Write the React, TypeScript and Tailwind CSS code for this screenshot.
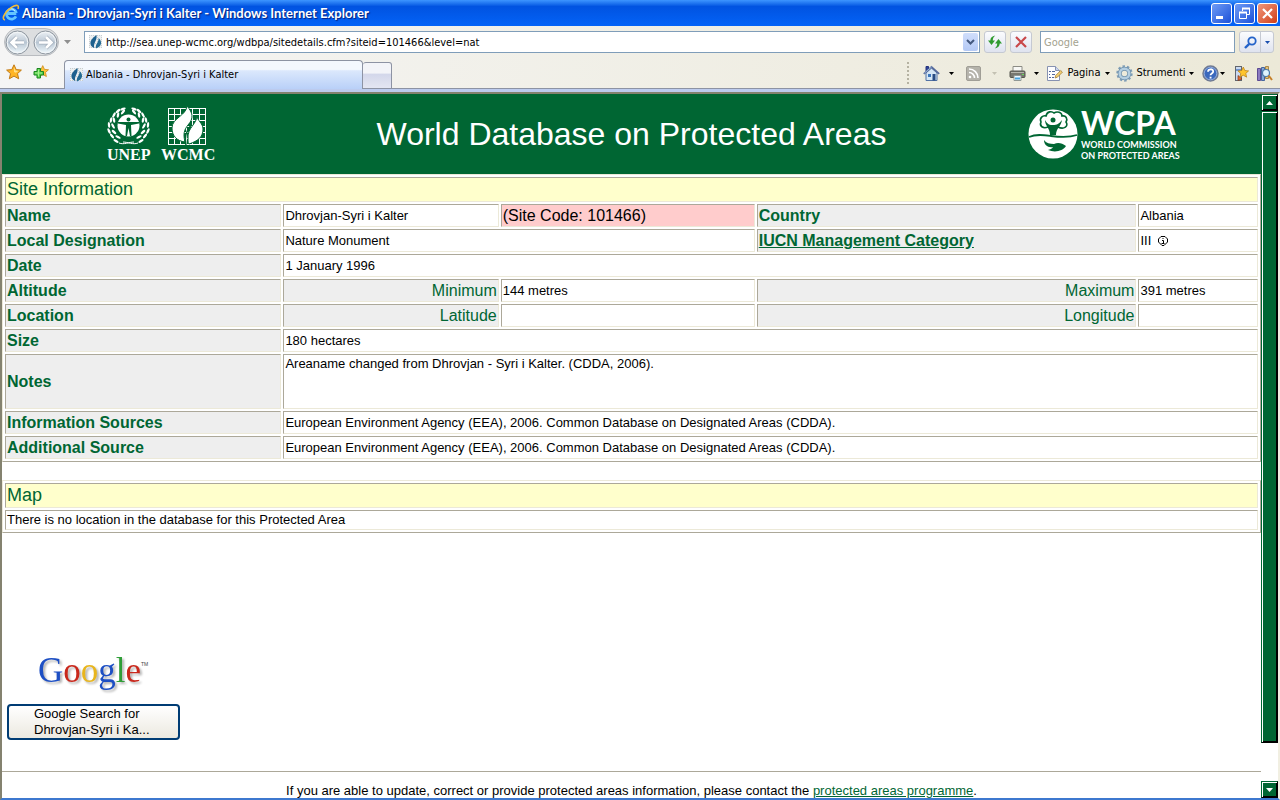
import type { ReactNode } from 'react';

const UI_FONT = "font-['DejaVu_Sans_Condensed','DejaVu_Sans',sans-serif]";

function IeIcon() {
  return (
    <svg width="18" height="18" viewBox="0 0 18 18" className="shrink-0">
      <path d="M4.5 9.5h9.8M14 12.4A5 5 0 1 1 14.4 9" fill="none" stroke="#64c5ff" strokeWidth="2.8" />
      <path d="M5 7.2a4.5 4.5 0 0 1 8 0" fill="none" stroke="#c9efff" strokeWidth="1" />
      <path d="M3 16C-2 15 5 5 12 2c4-1.600 5 0 4 3" fill="none" stroke="#f0bd39" strokeWidth="1.6" />
    </svg>
  );
}

function PageIcon() {
  return (
    <svg width="16" height="16" viewBox="0 0 16 16" className="shrink-0">
      <rect x="1" y="1" width="13" height="13" fill="#edf0f1" />
      <path d="M1.500 1v14M5.500 1v14M9.500 1v14M13.500 1v14M1 1.500h14M1 5.500h14M1 9.500h14M1 13.500h14" stroke="#c7cdd0" strokeWidth="1" strokeDasharray="1 1" />
      <path d="M8.500 1C5 4 2 6 2.500 10c.3 2 2 3.500 4 4C4.500 9.500 9.500 7 8.500 1Z" fill="#1d608e" />
      <path d="M10.500 4c4 3.500 3.500 8.500-2.500 10.500C7 9.500 11 9 10.500 4Z" fill="#246b94" />
    </svg>
  );
}

function NavButtons() {
  return (
    <div className="flex h-[28px] w-[55px] items-center justify-between rounded-full border border-[#b9bcc0] bg-[#dcdee0]">
      {[0, 1].map((n) => (
        <button key={n} type="button" aria-label={n === 0 ? 'Indietro' : 'Avanti'}>
          <svg width="25" height="25" viewBox="0 0 25 25">
            <defs>
              <linearGradient id={`nav${n}`} x1="0" y1="0" x2="0" y2="1">
                <stop offset="0" stopColor="#eef2f6" />
                <stop offset=".5" stopColor="#b9c6d3" />
                <stop offset="1" stopColor="#f2fbff" />
              </linearGradient>
            </defs>
            <circle cx="12.500" cy="12.500" r="11.500" fill={`url(#nav${n})`} stroke="#8d959e" />
            <circle cx="12.500" cy="12.500" r="10.200" fill="none" stroke="#f3f6f8" />
            <path
              d={n === 0 ? 'M19 12.500H7M12 7l-5.500 5.500L12 18' : 'M6 12.500h12M13 7l5.500 5.500L13 18'}
              fill="none"
              stroke="#a4afbc"
              strokeWidth="4"
            />
            <path
              d={n === 0 ? 'M19 12.500H7M12 7l-5.500 5.500L12 18' : 'M6 12.500h12M13 7l5.500 5.500L13 18'}
              fill="none"
              stroke="#fff"
              strokeWidth="2.600"
            />
          </svg>
        </button>
      ))}
    </div>
  );
}

function Caret({ color = '#000' }: { color?: string }) {
  return (
    <svg width="5" height="3" viewBox="0 0 5 3" className="shrink-0">
      <path d="M0 0h5L2.500 3Z" fill={color} />
    </svg>
  );
}

const STAR = 'M8 .8l2.200 4.800 5.200.5-3.900 3.500 1.200 5.200L8 12.100l-4.700 2.700 1.200-5.200L.6 6.100l5.200-.5Z';

function StarIcon() {
  return (
    <svg width="16" height="16" viewBox="0 0 16 16">
      <path d={STAR} fill="#ffb526" stroke="#c17a16" />
      <path d="M8 3l1.400 3.600 3 .4-2.600 1.800L8 8Z" fill="#ffe08a" />
    </svg>
  );
}

function AddStarIcon() {
  return (
    <svg width="16" height="16" viewBox="0 0 16 16">
      <path d={STAR} fill="#ffc43a" stroke="#c98a1d" transform="translate(3.500 1) scale(.78)" />
      <path d="M4 4.500h3.500v3h3V11h-3v3H4v-3H1V7.500h3Z" fill="#52cf48" stroke="#1c8522" />
      <path d="M5.500 5.500v7M2 9h7" stroke="#a8f08f" />
    </svg>
  );
}

function HomeIcon() {
  return (
    <svg width="17" height="17" viewBox="0 0 17 17">
      <path d="M3 1.500h2.500V5L3 7Z" fill="#31439b" stroke="#24347d" />
      <path d="M3 8v7.500h11V8L8.500 3Z" fill="#d5e6f5" stroke="#5272a4" />
      <path d="M.8 8.800 8.500 2l7.700 6.800" fill="none" stroke="#566a9b" strokeWidth="1.800" />
      <path d="M1.500 8 8.500 2" stroke="#9bb6db" />
      <rect x="5" y="9" width="3" height="3" fill="#3c76bc" />
      <rect x="9.500" y="9" width="3" height="6.500" fill="#284b83" />
    </svg>
  );
}

function FeedIcon() {
  return (
    <svg width="15" height="15" viewBox="0 0 15 15">
      <rect x=".5" y=".5" width="14" height="14" rx="1.500" fill="#b5b3ab" stroke="#a09e96" />
      <circle cx="4" cy="11" r="1.300" fill="#fff" />
      <path d="M3 6.500A5.500 5.500 0 0 1 8.500 12M3 3a9 9 0 0 1 9 9" fill="none" stroke="#fff" strokeWidth="1.600" />
    </svg>
  );
}

function PrinterIcon() {
  return (
    <svg width="17" height="17" viewBox="0 0 17 17">
      <path d="M4 1.500h9v5H4Z" fill="#f8f8f5" stroke="#8c8c85" />
      <rect x="1" y="6" width="15" height="6.500" rx="1" fill="#77776f" stroke="#55554e" />
      <path d="M2 7.500h13" stroke="#b6b6ad" />
      <path d="M5 10.500h7v5H5Z" fill="#eef8ff" stroke="#909895" />
      <path d="M6 13.500h5" stroke="#4aa4dd" strokeWidth="2" />
      <path d="M13 9.500h2" stroke="#68d85a" />
    </svg>
  );
}

function DocIcon() {
  return (
    <svg width="17" height="17" viewBox="0 0 17 17">
      <path d="M1.500 1.500h8l4 4v10h-12Z" fill="#fdfdff" stroke="#8792b1" />
      <path d="M9.500 1.500v4h4" fill="#cbd5ef" stroke="#8792b1" />
      <path d="M3 6.500h2m1 0h3M3 9.500h1m2 0h3M3 12.500h2m1 0h2" stroke="#52679d" />
      <path d="m9 13 .7-2.500 5-5 1.700 1.700-5 5Z" fill="#f2cf70" stroke="#a27b3a" strokeWidth=".8" />
    </svg>
  );
}

function GearIcon() {
  return (
    <svg width="17" height="17" viewBox="0 0 17 17">
      <circle cx="8.500" cy="8.500" r="7" fill="none" stroke="#7f9db6" strokeWidth="2.400" strokeDasharray="2.400 2" />
      <circle cx="8.500" cy="8.500" r="4.800" fill="none" stroke="#6e91ad" strokeWidth="4" />
      <circle cx="8.500" cy="8.500" r="4.800" fill="none" stroke="#b4cee1" strokeWidth="2.500" />
    </svg>
  );
}

function HelpIcon() {
  return (
    <svg width="17" height="17" viewBox="0 0 17 17">
      <circle cx="8.500" cy="8.500" r="7.500" fill="#3a68bd" stroke="#707a91" strokeWidth="1.500" />
      <circle cx="8.500" cy="8.500" r="6.300" fill="none" stroke="#b6c7e6" strokeWidth=".7" />
      <path d="M6 6.700C6 3.500 11.200 3.500 11.200 6.500c0 2-2.700 2-2.700 3.700" fill="none" stroke="#fff" strokeWidth="1.800" />
      <path d="M7.600 11.700h1.900v1.800H7.600Z" fill="#fff" />
    </svg>
  );
}

function SendStarIcon() {
  return (
    <svg width="15" height="17" viewBox="0 0 15 17">
      <rect x="1.500" y="1.500" width="6" height="14" fill="#cbd9ef" stroke="#61666e" />
      <path d="M2 5h5" stroke="#6f94cf" strokeWidth="2" />
      <path d="M4 15.500v-5l4 3.500Z" fill="#e66b33" stroke="#7e3519" strokeWidth=".7" />
      <path d={STAR} fill="#ffc52b" stroke="#b87c12" transform="translate(3.500 1.500) scale(.72)" />
    </svg>
  );
}

function ResearchIcon() {
  return (
    <svg width="17" height="17" viewBox="0 0 17 17">
      <path d="M1.500 3.500h3v12h-3Z" fill="#8b7bc0" stroke="#5c4b93" />
      <path d="M5.500 2.500h3v13h-3Z" fill="#83a7d9" stroke="#45659d" />
      <path d="M9.500 1.500h3v12h-3Z" fill="#e3c077" stroke="#a9884a" />
      <circle cx="10" cy="8" r="3.500" fill="#dff4ff" stroke="#4b7bab" strokeWidth="1.200" />
      <path d="m12.500 10.500 3.500 4.500" stroke="#c6802a" strokeWidth="2" />
    </svg>
  );
}

function TitleBar() {
  return (
    <header className="flex h-[26px] shrink-0 items-center bg-linear-to-b from-[#3d95ff] via-[#0153e1] via-25% to-[#0463f7] px-[2px]">
      <IeIcon />
      <h1 className="ml-[2px] flex-1 truncate font-['Lato',sans-serif] text-[13px] leading-[26px] font-bold text-white [text-shadow:1px_1px_1px_#0a1f7a]">
        Albania - Dhrovjan-Syri i Kalter - Windows Internet Explorer
      </h1>
      <div className="flex gap-[2px]">
        <button type="button" aria-label="Riduci a icona" className="size-[21px] rounded-[3px] border border-white bg-linear-to-br from-[#6f9bf5] to-[#1c4fd8]">
          <svg width="19" height="19" viewBox="0 0 19 19">
            <rect x="4" y="12" width="7" height="3" fill="#fff" />
          </svg>
        </button>
        <button type="button" aria-label="Ripristina" className="size-[21px] rounded-[3px] border border-white bg-linear-to-br from-[#6f9bf5] to-[#1c4fd8]">
          <svg width="19" height="19" viewBox="0 0 19 19" fill="none" stroke="#fff">
            <path d="M7.500 7V4.500h7v6H12" />
            <path d="M7 4.500h8" strokeWidth="2" />
            <path d="M4.500 8.500h7v6h-7Z" />
            <path d="M4 8.500h8" strokeWidth="2" />
          </svg>
        </button>
        <button type="button" aria-label="Chiudi" className="size-[21px] rounded-[3px] border border-white bg-linear-to-br from-[#f0967a] to-[#cf3a0c]">
          <svg width="19" height="19" viewBox="0 0 19 19">
            <path d="m5 5 9 9M14 5l-9 9" stroke="#fff" strokeWidth="2.200" />
          </svg>
        </button>
      </div>
    </header>
  );
}

function AddressBar() {
  return (
    <div className="flex h-[32px] items-center pl-[4px] pr-[6px]">
      <NavButtons />
      <button type="button" aria-label="Pagine recenti" className="mr-[13px] ml-[5px] flex w-[7px] justify-center">
        <svg width="7" height="4" viewBox="0 0 7 4">
          <path d="M0 0h7L3.500 4Z" fill="#8f8f8f" />
        </svg>
      </button>
      <div className="flex h-[22px] flex-1 items-center border border-[#7f9db9] bg-white pl-[3px] pr-px">
        <PageIcon />
        <input
          aria-label="Indirizzo"
          defaultValue="http://sea.unep-wcmc.org/wdbpa/sitedetails.cfm?siteid=101466&level=nat"
          className="ml-[2px] h-[18px] min-w-0 flex-1 bg-transparent text-[11px] text-black outline-none"
        />
        <button type="button" aria-label="Mostra indirizzi" className="flex h-[18px] w-[15px] items-center justify-center rounded-[2px] bg-linear-to-b from-[#d0defb] to-[#b4c9f5]">
          <svg width="9" height="6" viewBox="0 0 9 6">
            <path d="m1 1 3.500 3.500L8 1" fill="none" stroke="#44597f" strokeWidth="2" />
          </svg>
        </button>
      </div>
      <button type="button" aria-label="Aggiorna" className="ml-[4px] flex h-[22px] w-[22px] items-center justify-center rounded-[3px] border border-[#c5c9d2] bg-linear-to-b from-[#fbfcfe] to-[#dfe3ef]">
        <svg width="16" height="16" viewBox="0 0 16 16" fill="#2f9b2f">
          <path d="M1 6.500 4.500 11 8 6.500H5.800c0-2 .7-3.500 2.400-5C5 2 3.300 4 3.300 6.500Z" />
          <path d="M15 9.500 11.500 5 8 9.500h2.200c0 2-.7 3.500-2.400 5 3.200-.5 4.900-2.500 4.900-5Z" />
        </svg>
      </button>
      <button type="button" aria-label="Interrompi" className="ml-[4px] flex h-[22px] w-[22px] items-center justify-center rounded-[3px] border border-[#c5c9d2] bg-linear-to-b from-[#fbfcfe] to-[#dfe3ef]">
        <svg width="12" height="12" viewBox="0 0 12 12">
          <path d="M1 1l10 10M11 1 1 11" stroke="#c9484a" strokeWidth="2.200" />
        </svg>
      </button>
      <input
        aria-label="Cerca"
        placeholder="Google"
        className="ml-[8px] h-[22px] w-[195px] border border-[#7f9db9] bg-white px-[3px] text-[11px] outline-none placeholder:text-[#a3a28f]"
      />
      <div className="ml-[4px] flex h-[22px] rounded-[3px] border border-[#c5c9d2] bg-linear-to-b from-[#fbfcfe] to-[#dfe3ef]">
        <button type="button" aria-label="Avvia ricerca" className="flex w-[21px] items-center justify-center border-r border-[#c5c9d2]">
          <svg width="13" height="13" viewBox="0 0 13 13" fill="none" stroke="#2463c9">
            <circle cx="8" cy="5" r="3.700" strokeWidth="1.800" />
            <path d="M5.200 7.800 1 12" strokeWidth="2.400" />
          </svg>
        </button>
        <button type="button" aria-label="Opzioni di ricerca" className="flex w-[12px] items-center justify-center">
          <Caret color="#1a4fae" />
        </button>
      </div>
    </div>
  );
}

function Tool({ label, width, children }: { label: string; width: string; children: ReactNode }) {
  return (
    <button type="button" aria-label={label} className={`flex items-center justify-between ${width}`}>
      {children}
    </button>
  );
}

function TabRow() {
  return (
    <div className="flex h-[31px] items-end border-b border-[#8d93a3] pl-[6px] pr-[7px]">
      <div className="flex h-full items-center gap-[11px] pb-[2px]">
        <button type="button" aria-label="Preferiti">
          <StarIcon />
        </button>
        <button type="button" aria-label="Aggiungi a Preferiti">
          <AddStarIcon />
        </button>
      </div>
      <div className="-mb-px ml-[15px] flex h-[29px] w-[299px] items-center rounded-t-[4px] border border-b-0 border-[#8d93a3] bg-linear-to-b from-[#f4f8fe] from-30% via-[#dbe8fc] via-35% to-[#b9d0f8] pl-[4px]">
        <PageIcon />
        <span className="ml-px text-[11px] text-black">Albania - Dhrovjan-Syri i Kalter</span>
      </div>
      <button
        type="button"
        aria-label="Nuova scheda"
        className="-mb-px h-[27px] w-[29px] rounded-t-[3px] border border-l-0 border-[#8d93a3] bg-linear-to-b from-[#f3f4f8] from-40% via-[#d3d7ea] via-45% to-[#e4e6f2]"
      />
      <div className="ml-auto flex h-full items-center text-[11px] text-black">
        <span className="mr-[14px] h-[22px] border-l-2 border-dotted border-[#b5b2a2]" />
        <Tool label="Pagina iniziale" width="w-[31px]">
          <HomeIcon />
          <Caret />
        </Tool>
        <span className="w-[12px]" />
        <Tool label="Feed" width="w-[31px]">
          <FeedIcon />
          <Caret color="#c4c1b3" />
        </Tool>
        <span className="w-[12px]" />
        <Tool label="Stampa" width="w-[30px]">
          <PrinterIcon />
          <Caret />
        </Tool>
        <span className="w-[7px]" />
        <Tool label="Pagina" width="w-[64px]">
          <DocIcon />
          <span>Pagina</span>
          <Caret />
        </Tool>
        <span className="w-[6px]" />
        <Tool label="Strumenti" width="w-[78px]">
          <GearIcon />
          <span>Strumenti</span>
          <Caret />
        </Tool>
        <span className="w-[8px]" />
        <Tool label="Guida" width="w-[23px]">
          <HelpIcon />
          <Caret />
        </Tool>
        <span className="w-[9px]" />
        <Tool label="Invia a preferiti" width="w-[15px]">
          <SendStarIcon />
        </Tool>
        <span className="w-[7px]" />
        <Tool label="Ricerche" width="w-[17px]">
          <ResearchIcon />
        </Tool>
      </div>
    </div>
  );
}

// laurel leaves, drawn once and mirrored for the right-hand branch
const LEAVES = [
  [17, 3, 70], [12, 5, 50], [8, 9, 30], [5, 14, 10], [3, 19, -5], [3, 25, -25], [6, 30, -40], [10, 35, -60],
  [17, 6, 40], [12, 9, 10], [8, 14, -10], [7, 20, -30], [8, 26, -50], [12, 31, -65],
];

function UnepLogo() {
  return (
    <svg width="110" height="56" viewBox="0 0 110 56" aria-label="UNEP WCMC">
      <g fill="#fff">
        {LEAVES.map(([x, y, r]) => (
          <ellipse key={`${x}-${y}`} cx={x} cy={y} rx="1.200" ry="2.900" transform={`rotate(${r} ${x} ${y})`} />
        ))}
        <g transform="translate(45 0) scale(-1 1)">
          {LEAVES.map(([x, y, r]) => (
            <ellipse key={`${x}-${y}`} cx={x} cy={y} rx="1.200" ry="2.900" transform={`rotate(${r} ${x} ${y})`} />
          ))}
        </g>
        <circle cx="22.500" cy="19.500" r="11" />
      </g>
      <path d="M13 37c5 2 10-1 15-1M32 37c-5 2-10-1-15-1" fill="none" stroke="#fff" />
      <g fill="#063">
        <circle cx="22.500" cy="13.500" r="2" />
        <path d="M12 16h21v1.500l-8 1.500L25.500 30h-1.500l-1.500-8L21 30h-1.500L20 19l-8-1.500Z" />
      </g>
      <path
        d="M62.500 2v37M68.500 2v37M74.500 2v37M80.500 2v37M86.500 2v37M93.500 2v37M99.500 2v37M62 2.500h38M62 8.500h38M62 14.500h38M62 20.500h38M62 26.500h38M62 32.500h38M62 38.500h38"
        stroke="#fff"
        strokeWidth="1"
      />
      <path d="M81 0c6 7 7 12 1 19-4 5-5 9-3 17-8-1-13-6-13-14C66 12 80 10 81 0Z" fill="#fff" stroke="#063" />
      <path d="M91 9c0 10-10 12-9 24 0 3 0 4 1 5 9-3 14-7 14-15 0-6-6-8-6-14Z" fill="#fff" stroke="#063" />
      <path d="M80 39c-2-8 0-13 5-20" fill="none" stroke="#063" strokeWidth="1.500" />
      <g fill="#fff" fontFamily="Liberation Serif, serif" fontWeight="bold" fontSize="16">
        <text x="1" y="54">UNEP</text>
        <text x="55" y="54">WCMC</text>
      </g>
    </svg>
  );
}

function WcpaLogo() {
  return (
    <svg width="156" height="64" viewBox="0 -5 156 64" aria-label="WCPA">
      <circle cx="25" cy="27" r="24.500" fill="#fff" />
      <g fill="none" stroke="#063">
        <path
          d="M20 20c-5 2-9-1-7-5-2-4 2-7 5-6 1-5 6-5 8-3 3-2 8-1 8 3 4-1 6 3 4 6 3 4-2 8-8 5"
          strokeWidth="1.600"
        />
        <path d="M1 30c7-3 14-2 22-1s17 2 26-1" strokeWidth="1.800" />
      </g>
      <g fill="#063">
        <circle cx="25" cy="13" r="2.500" />
        <path d="M17 13c3 5 5 5 8 5 4 0 6-1 9-5-1 7-6 8-6 15h-6c0-7-5-9-5-15Z" />
        <path d="M16 33c2 3 6 4 10 4 4-2 8-1 12 2-3 5-11 7-18 4 2-1 4-1 5-3-5 1-9-2-9-7Z" />
      </g>
      <g fill="#fff" fontFamily="Lato, sans-serif" fontWeight="bold">
        <text x="53" y="28" fontSize="32">WCPA</text>
        <text x="53" y="41" fontSize="9">WORLD COMMISSION</text>
        <text x="53" y="52" fontSize="9">ON PROTECTED AREAS</text>
      </g>
    </svg>
  );
}

const CELL = 'border border-t-[#aca899] border-l-[#aca899] border-r-[#ece9d8] border-b-[#ece9d8] px-px py-0';
const LABEL = `${CELL} bg-[#eee] text-left text-[16px] leading-[21px] font-bold text-[#063]`;
const SUB = `${CELL} bg-[#eee] text-right text-[16px] leading-[21px] font-normal text-[#063]`;
const VALUE = `${CELL} h-[23px] bg-white text-[13px] leading-[18px] text-black`;
const BAND = `${CELL} h-[25px] bg-[#ffc] text-left text-[18px] leading-[23px] font-normal text-[#063]`;
const TABLE =
  'w-full table-fixed border-separate border-spacing-[2px] border border-t-[#ece9d8] border-l-[#ece9d8] border-r-[#aca899] border-b-[#aca899]';

function SiteTable() {
  return (
    <table className={TABLE}>
      <colgroup>
        <col className="w-[22.200%]" />
        <col className="w-[17.300%]" />
        <col className="w-[20.400%]" />
        <col className="w-[30.500%]" />
        <col />
      </colgroup>
      <tbody>
        <tr>
          <th colSpan={5} className={BAND}>Site Information</th>
        </tr>
        <tr>
          <th className={LABEL}>Name</th>
          <td className={VALUE}>Dhrovjan-Syri i Kalter</td>
          <td className={`${CELL} bg-[#fcc] text-[16px] leading-[21px] text-black`}>(Site Code: 101466)</td>
          <th className={LABEL}>Country</th>
          <td className={VALUE}>Albania</td>
        </tr>
        <tr>
          <th className={LABEL}>Local Designation</th>
          <td colSpan={2} className={VALUE}>Nature Monument</td>
          <th className={LABEL}>
            <a href="#iucn" className="underline">IUCN Management Category</a>
          </th>
          <td className={VALUE}>
            <div className="flex items-center gap-[6px]">
              III
              <svg width="12" height="12" viewBox="0 0 12 12" fill="none" stroke="#000">
                <path d="M4 1.500h4L10.500 4v3L7 10.500H5L1.500 7V4Z" />
                <path d="M5 5.500h1.500v3M4.500 8.500h3M5.500 3.500h1" />
              </svg>
            </div>
          </td>
        </tr>
        <tr>
          <th className={LABEL}>Date</th>
          <td colSpan={4} className={VALUE}>1 January 1996</td>
        </tr>
        <tr>
          <th className={LABEL}>Altitude</th>
          <th className={SUB}>Minimum</th>
          <td className={VALUE}>144 metres</td>
          <th className={SUB}>Maximum</th>
          <td className={VALUE}>391 metres</td>
        </tr>
        <tr>
          <th className={LABEL}>Location</th>
          <th className={SUB}>Latitude</th>
          <td className={VALUE} />
          <th className={SUB}>Longitude</th>
          <td className={VALUE} />
        </tr>
        <tr>
          <th className={LABEL}>Size</th>
          <td colSpan={4} className={VALUE}>180 hectares</td>
        </tr>
        <tr>
          <th className={LABEL}>Notes</th>
          <td colSpan={4} className={`${CELL} h-[55px] bg-white align-top text-[13px] leading-[18px] text-black`}>
            Areaname changed from Dhrovjan - Syri i Kalter. (CDDA, 2006).
          </td>
        </tr>
        {['Information Sources', 'Additional Source'].map((name) => (
          <tr key={name}>
            <th className={LABEL}>{name}</th>
            <td colSpan={4} className={VALUE}>
              European Environment Agency (EEA), 2006. Common Database on Designated Areas (CDDA).
            </td>
          </tr>
        ))}
      </tbody>
    </table>
  );
}

function GoogleLogo() {
  return (
    <svg width="116" height="46" viewBox="0 0 116 46" aria-label="Google">
      <text
        x="3"
        y="32"
        fontFamily="Liberation Serif, serif"
        fontSize="35"
        className="drop-shadow-[2px_2px_1px_rgba(0,0,0,0.3)]"
      >
        <tspan fill="#1d4fc4">G</tspan>
        <tspan fill="#c9281c">o</tspan>
        <tspan fill="#e8b51d">o</tspan>
        <tspan fill="#1d4fc4">g</tspan>
        <tspan fill="#2f9e37">l</tspan>
        <tspan fill="#c9281c">e</tspan>
      </text>
      <text x="106" y="16" fontFamily="Liberation Sans, sans-serif" fontSize="5" fill="#444">TM</text>
    </svg>
  );
}

function ScrollBar() {
  const face = 'border border-t-[#063] border-l-[#063] border-r-black border-b-black bg-[#063] shadow-[inset_1px_1px_0_#fff,inset_-1px_-1px_0_#000]';
  return (
    <div className="flex w-[17px] shrink-0 flex-col bg-white">
      <button type="button" aria-label="Scorri su" className={`flex h-[17px] items-center justify-center ${face}`}>
        <svg width="7" height="4" viewBox="0 0 7 4">
          <path d="M0 4h7L3.500 0Z" fill="#fff" />
        </svg>
      </button>
      <div className="flex-1">
        <div className={`h-[94.300%] ${face}`} />
      </div>
      <button type="button" aria-label="Scorri giù" className={`flex h-[17px] items-center justify-center ${face}`}>
        <svg width="7" height="4" viewBox="0 0 7 4">
          <path d="M0 0h7L3.500 4Z" fill="#fff" />
        </svg>
      </button>
    </div>
  );
}

export default function App() {
  return (
    <div className={`flex h-screen flex-col overflow-hidden bg-white ${UI_FONT}`}>
      <TitleBar />
      <nav className="shrink-0 bg-linear-to-r from-[#f5f5f5] to-[#ece9d8]">
        <AddressBar />
        <TabRow />
        <div className="h-[3px] bg-[#bccbee]" />
      </nav>
      <div className="flex min-h-0 flex-1 border-t-2 border-r-2 border-b-2 border-l-2 border-t-[#84826f] border-r-[#f1efe2] border-b-[#3d78cf] border-l-[#84826f]">
        <main className="flex min-w-0 flex-1 flex-col overflow-hidden font-['Liberation_Sans',Arial,sans-serif]">
          <div className="grid h-[80px] shrink-0 grid-cols-[1fr_auto_1fr] items-center bg-[#063] px-[77px] text-white">
            <div className="pl-[27px]">
              <UnepLogo />
            </div>
            <h2 className="text-[32px] leading-[40px]">World Database on Protected Areas</h2>
            <div className="justify-self-end">
              <WcpaLogo />
            </div>
          </div>
          <SiteTable />
          <table className={`mt-[18px] ${TABLE}`}>
            <tbody>
              <tr>
                <th className={BAND}>Map</th>
              </tr>
              <tr>
                <td className={`${CELL} bg-white text-[13px] leading-[18px] text-black`}>
                  There is no location in the database for this Protected Area
                </td>
              </tr>
            </tbody>
          </table>
          <form className="mt-[117px] flex flex-col items-start pl-[5px]" onSubmit={(e) => e.preventDefault()}>
            <div className="ml-[28px]">
              <GoogleLogo />
            </div>
            <button
              type="submit"
              className="mt-[8px] h-[36px] w-[173px] rounded-[4px] border-2 border-[#003c74] bg-linear-to-b from-white to-[#ece9e0] pl-[25px] text-left text-[13px] leading-[16px] text-black"
            >
              Google Search for
              <br />
              Dhrovjan-Syri i Ka...
            </button>
          </form>
          <hr className="mt-[31px] border-t border-[#aca899]" />
          <p className="mt-[10px] shrink-0 text-center text-[13px] leading-[18px] text-black">
            If you are able to update, correct or provide protected areas information, please contact the{' '}
            <a href="#programme" className="text-[#063] underline">protected areas programme</a>.
          </p>
        </main>
        <ScrollBar />
      </div>
    </div>
  );
}
